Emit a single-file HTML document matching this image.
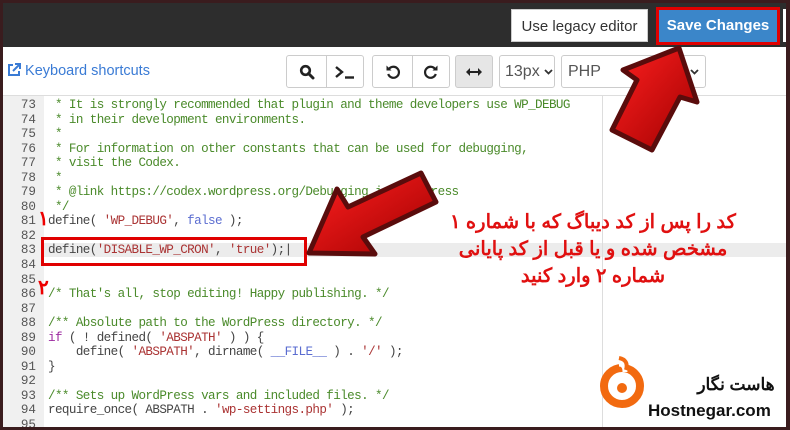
<!DOCTYPE html>
<html><head><meta charset="utf-8">
<style>
*{margin:0;padding:0;box-sizing:border-box}
body{width:790px;height:430px;overflow:hidden;background:#3a1c1e;position:relative;font-family:"Liberation Sans",sans-serif}
.frame{position:absolute;left:3px;top:3px;width:783px;height:424px;background:#fff;overflow:hidden}
.top{position:absolute;left:0;top:0;width:100%;height:44px;background:#2d2d2d}
.legacy{position:absolute;left:508px;top:6px;width:137px;height:33px;background:#fff;color:#333;font-size:15px;line-height:33px;text-align:center;border:1px solid #ccc}
.save{position:absolute;left:653px;top:4px;width:124px;height:38px;border:3px solid #e00000;background:#3b86c9;color:#fff;font-weight:bold;font-size:15px;line-height:32px;text-align:center}
.stub{position:absolute;left:780px;top:6px;width:10px;height:33px;background:#fff}
.tb{position:absolute;top:52px;height:33px;border:1px solid #ccc;border-radius:3px;background:#fff;display:flex;align-items:center;justify-content:center;font-size:16px;color:#333}
.ks{position:absolute;left:4px;top:60px;color:#3a7bd5;font-size:14.5px}
.gutter{position:absolute;left:0;top:93px;width:41px;height:340px;background:#f0f0f0}
.sep{position:absolute;left:0;top:92px;width:100%;height:1px;background:#ddd}
.vl{position:absolute;left:599px;top:93px;width:1px;height:340px;background:#ddd}
.code{position:absolute;left:0;top:95px;font-family:"Liberation Mono",monospace;font-size:12.6px;letter-spacing:-0.6px;line-height:14.55px;white-space:pre}
.ln{display:inline-block;width:33px;text-align:right;color:#555;margin-right:12px;letter-spacing:0}
.c{color:#4a8a2a}.s{color:#a33}.k{color:#9c2aa0}.b{color:#5a6cd0}.d{color:#444}
.hl{position:absolute;left:41px;top:240px;width:744px;height:14px;background:#ececec}
.box{position:absolute;left:38px;top:234px;width:266px;height:29px;border:3px solid #e00000}
.fa{position:absolute;color:#e01010;font-family:"Liberation Sans","Noto Sans CJK SC",sans-serif;font-size:19.5px;font-weight:bold;direction:rtl;text-align:center;line-height:27px}
.i{position:absolute;top:0;width:40px;height:31px;display:flex;align-items:center;justify-content:center}
</style></head><body>
<div class="frame">
<div class="top"></div>
<div class="legacy">Use legacy editor</div>
<div class="save">Save Changes</div>
<div class="stub"></div>
<div class="ks"><svg width="14" height="14" viewBox="0 0 14 14" style="vertical-align:-2px"><path d="M6 2H2v10h10V8" fill="none" stroke="#3a7bd5" stroke-width="2"/><path d="M8 1h5v5M13 1L6 8" fill="none" stroke="#3a7bd5" stroke-width="2"/></svg> Keyboard shortcuts</div>
<div class="tb" style="left:283px;width:78px">
 <div class="i" style="left:0;border-right:1px solid #ccc"><svg width="16" height="16" viewBox="0 0 16 16"><circle cx="6.5" cy="6.5" r="4.3" fill="none" stroke="#222" stroke-width="2.6"/><path d="M9.5 9.5L14 14" stroke="#222" stroke-width="3" stroke-linecap="round"/></svg></div>
 <div class="i" style="left:38px"><svg width="20" height="14" viewBox="0 0 20 14"><path d="M1 2l6 5-6 5" fill="none" stroke="#222" stroke-width="2.4"/><path d="M10 12.5h9" stroke="#222" stroke-width="2.4"/></svg></div>
</div>
<div class="tb" style="left:369px;width:78px">
 <div class="i" style="left:0;border-right:1px solid #ccc"><svg width="16" height="16" viewBox="0 0 16 16"><path d="M4 5A5.5 5.5 0 1 1 3.2 10" fill="none" stroke="#222" stroke-width="2.2"/><path d="M1.5 1.5v5h5z" fill="#222"/></svg></div>
 <div class="i" style="left:38px"><svg width="16" height="16" viewBox="0 0 16 16"><path d="M12 5A5.5 5.5 0 1 0 12.8 10" fill="none" stroke="#222" stroke-width="2.2"/><path d="M14.5 1.5v5h-5z" fill="#222"/></svg></div>
</div>
<div class="tb" style="left:452px;width:38px;background:#e6e6e6"><svg width="16" height="8" viewBox="0 0 16 8"><path d="M3 4h10" stroke="#222" stroke-width="2"/><path d="M0 4l4-4v8zM16 4l-4-4v8z" fill="#222"/></svg></div>
<div class="tb" style="left:496px;width:56px;justify-content:flex-start;padding-left:5px;color:#555">13px <svg style="margin-left:4px" width="9" height="6" viewBox="0 0 9 6"><path d="M1 1l3.5 3.5L8 1" fill="none" stroke="#333" stroke-width="1.8"/></svg></div>
<div class="tb" style="left:558px;width:145px;justify-content:space-between;padding:0 6px;color:#555"><span>PHP</span><svg width="9" height="6" viewBox="0 0 9 6"><path d="M1 1l3.5 3.5L8 1" fill="none" stroke="#333" stroke-width="1.8"/></svg></div>
<div class="sep"></div>
<div class="gutter"></div>
<div class="hl"></div>
<div class="vl"></div>
<div class="code"><span class="ln">73</span><span class="c"> * It is strongly recommended that plugin and theme developers use WP_DEBUG</span>
<span class="ln">74</span><span class="c"> * in their development environments.</span>
<span class="ln">75</span><span class="c"> *</span>
<span class="ln">76</span><span class="c"> * For information on other constants that can be used for debugging,</span>
<span class="ln">77</span><span class="c"> * visit the Codex.</span>
<span class="ln">78</span><span class="c"> *</span>
<span class="ln">79</span><span class="c"> * @link https://codex.wordpress.org/Debugging_in_WordPress</span>
<span class="ln">80</span><span class="c"> */</span>
<span class="ln">81</span><span class="d">define( </span><span class="s">'WP_DEBUG'</span><span class="d">, </span><span class="b">false</span><span class="d"> );</span>
<span class="ln">82</span>
<span class="ln">83</span><span class="d">define(</span><span class="s">'DISABLE_WP_CRON'</span><span class="d">, </span><span class="s">'true'</span><span class="d">);|</span>
<span class="ln">84</span>
<span class="ln">85</span>
<span class="ln">86</span><span class="c">/* That's all, stop editing! Happy publishing. */</span>
<span class="ln">87</span>
<span class="ln">88</span><span class="c">/** Absolute path to the WordPress directory. */</span>
<span class="ln">89</span><span class="k">if</span><span class="d"> ( ! defined( </span><span class="s">'ABSPATH'</span><span class="d"> ) ) {</span>
<span class="ln">90</span><span class="d">    define( </span><span class="s">'ABSPATH'</span><span class="d">, dirname( </span><span class="b">__FILE__</span><span class="d"> ) . </span><span class="s">'/'</span><span class="d"> );</span>
<span class="ln">91</span><span class="d">}</span>
<span class="ln">92</span>
<span class="ln">93</span><span class="c">/** Sets up WordPress vars and included files. */</span>
<span class="ln">94</span><span class="d">require_once( ABSPATH . </span><span class="s">'wp-settings.php'</span><span class="d"> );</span>
<span class="ln">95</span></div>
<div class="box"></div>
<div style="position:absolute;left:35px;top:203px;color:#e00;font-size:20px;font-weight:bold;font-family:'Liberation Sans','Noto Sans CJK SC',sans-serif">۱</div>
<div style="position:absolute;left:35px;top:272px;color:#e00;font-size:20px;font-weight:bold;font-family:'Liberation Sans','Noto Sans CJK SC',sans-serif">۲</div>
<div class="fa" style="left:420px;top:206px;width:340px">کد را پس از کد دیباگ که با شماره ۱<br>مشخص شده و یا  قبل از کد پایانی<br>شماره ۲ وارد کنید</div>
<svg style="position:absolute;left:0;top:0" width="784" height="424">
<defs><linearGradient id="g" x1="0" y1="0" x2="1" y2="1"><stop offset="0" stop-color="#ff2020"/><stop offset="1" stop-color="#a00000"/></linearGradient></defs>
<polygon points="676,45 620,67 634,77 609,127 649,147 677,94 694,99" fill="url(#g)" stroke="#5a0c0c" stroke-width="5" stroke-linejoin="round"/>
<polygon points="306,250 334,186 345,204 418,170 433,199 360,234 372,251" fill="url(#g)" stroke="#5a0c0c" stroke-width="5" stroke-linejoin="round"/>
<g transform="translate(619,383)">
<circle cx="0" cy="0" r="18" fill="none" stroke="#f26a10" stroke-width="8"/>
<circle cx="0" cy="2" r="5" fill="#f26a10"/>
<path d="M-3,-22 q6,0 6,8" stroke="#fff" stroke-width="5" fill="none"/>
<path d="M-3,-28 q10,2 7,12" stroke="#f26a10" stroke-width="4" fill="none"/>
</g>
<text x="733" y="387" font-family="Liberation Sans,Noto Sans CJK SC,sans-serif" font-size="17" font-weight="bold" fill="#111" text-anchor="middle" direction="rtl">هاست نگار</text>
<text x="645" y="413" font-family="Liberation Sans,sans-serif" font-size="17" font-weight="bold" fill="#111">Hostnegar.com</text>
</svg>
</div>
</body></html>
